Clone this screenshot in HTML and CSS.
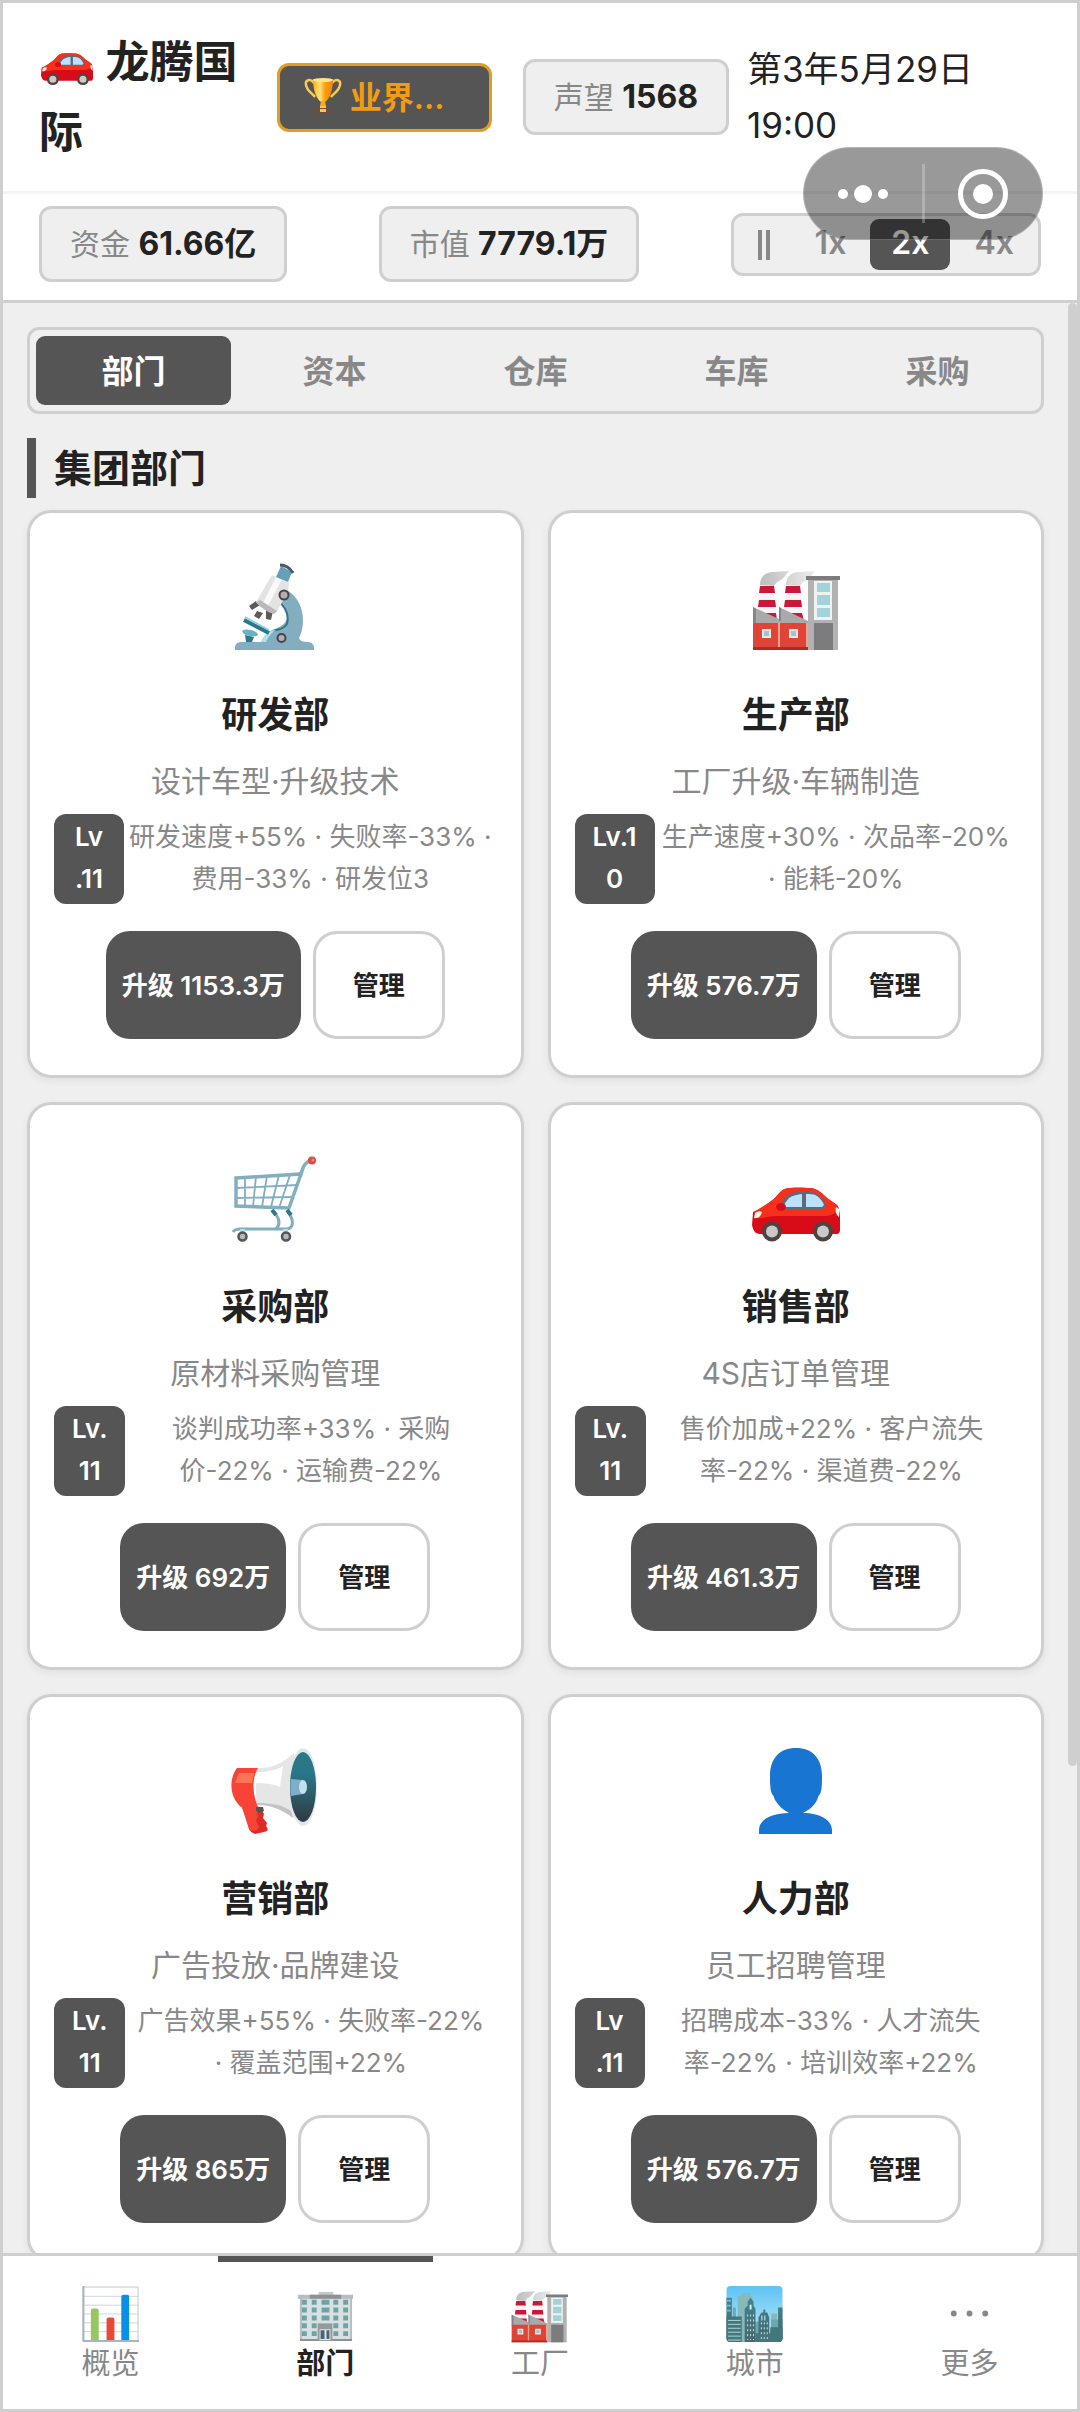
FILE: index.html
```html
<!DOCTYPE html>
<html lang="zh-CN">
<head>
    <meta charset="UTF-8">
    <meta name="viewport" content="width=device-width, initial-scale=1.0">
    <title>龙腾国际 - 部门</title>
    <link rel="stylesheet" href="styles.css">
</head>
<body>
    <!-- 图标库 -->
    <svg class="icon-defs" aria-hidden="true">
        <defs>
            <linearGradient id="sky" x1="0" y1="0" x2="0" y2="1">
                <stop offset="0" stop-color="#5fc3f3"/>
                <stop offset="0.7" stop-color="#a5e0f7"/>
            </linearGradient>
            <linearGradient id="tower" x1="0" y1="0" x2="0" y2="1">
                <stop offset="0" stop-color="#3f8492"/>
                <stop offset="1" stop-color="#4a666c"/>
            </linearGradient>
            <linearGradient id="horn" x1="0" y1="0" x2="0" y2="1">
                <stop offset="0.3" stop-color="#2a7789"/>
                <stop offset="1" stop-color="#2f3a40"/>
            </linearGradient>
            <linearGradient id="gold" x1="0" y1="0" x2="1" y2="0">
                <stop offset="0" stop-color="#ffb300"/>
                <stop offset="0.35" stop-color="#ffe082"/>
                <stop offset="0.6" stop-color="#ffa000"/>
                <stop offset="1" stop-color="#f57f17"/>
            </linearGradient>
            <linearGradient id="smoke" x1="0" y1="0" x2="1" y2="0">
                <stop offset="0" stop-color="#bdbdbd"/>
                <stop offset="1" stop-color="#ececec"/>
            </linearGradient>

            <symbol id="i-car" viewBox="0 0 88 88">
                <path fill="#d80c18" d="M1 58c0-2 3-2 5-3 7-4 12-8 17-12 5-6 8-10 15-10 8-1 17 0 21 0 7 1 12 6 16 10l10 7c2 2 3 9 3 14v11c0 2-1 4-3 4H8c-5 0-7-4-8-9z"/>
                <path fill="#f7301c" d="M2 57c8-5 15-9 21-14 5-6 8-10 15-10h21c7 1 12 6 16 10l10 7 2 5c-4 4-9 6-16 6H25c-8 0-14 3-20 2z"/>
                <path fill="#5d6a78" d="M27 54c3-8 7-14 13-16 8-2 20-2 25 1 5 3 8 8 9 12l-3 3z"/>
                <path fill="#bbe1fb" d="M31 52c3-6 6-10 10-11 3-1 6-2 9-2v13zM54 39c4 0 8 0 11 2 3 2 6 6 7 9l-2 2H54z"/>
                <ellipse cx="29" cy="52" rx="5" ry="4" fill="#d80c18"/>
                <path fill="#fff4ea" d="M3 58c3-2 6-2 7-1-1 4-4 7-8 6zM87 54l-3-2c-1 4 0 8 3 10z"/>
                <circle cx="20" cy="76.500" r="10" fill="#50433f"/>
                <circle cx="20" cy="76.500" r="6" fill="#c9c9c9"/>
                <circle cx="71" cy="76.500" r="10" fill="#50433f"/>
                <circle cx="71" cy="76.500" r="6" fill="#c9c9c9"/>
            </symbol>

            <symbol id="i-trophy" viewBox="0 0 38 38">
                <path fill="none" stroke="#f5cb53" stroke-width="2.500" d="M10 6C6 1 1 3 2 8c1 6 6 8 9 12M28 6c4-5 9-3 8 2-1 6-6 8-9 12"/>
                <path fill="url(#gold)" d="M9 2h20c0 10-3 20-8 23h-4C12 22 9 12 9 2z"/>
                <ellipse cx="19" cy="3" rx="10" ry="2" fill="#ffe58a"/>
                <path fill="#f9a825" d="M17 24h4l1 5h-6z"/>
                <path fill="#6d4c41" d="M12 31h14l3 6H9z"/>
                <path fill="#ffca28" d="M16 29h6v2h-6zM16 32h6v3h-6z"/>
            </symbol>

            <symbol id="i-microscope" viewBox="0 0 88 88">
                <path fill="#82aec0" d="M57 28c10 6 15 17 15 30 0 7-2 13-4 17 1 3 4 4 9 4 4 0 6 3 6 6v2H4v-2c0-4 3-6 6-6h20c3-6 7-11 14-13 9-3 13-8 12-16-1-5-3-9-6-11z"/>
                <path fill="none" stroke="#2f7889" stroke-width="2" d="M50 40c6 7 8 14 6 21-4 6-9 5-14 7"/>
                <path fill="#b3e1ee" d="M30 79c4-8 9-12 15-12-5 3-8 7-10 12z"/>
                <path stroke="#2f7889" stroke-width="4" d="M13 57l25 13"/>
                <path stroke="#84d0e4" stroke-width="1.500" d="M14 54l24 13"/>
                <path fill="#2f7889" d="M14 72l9 2-2 5h-6z"/>
                <ellipse cx="19" cy="70" rx="8" ry="3" fill="#68b2c3" transform="rotate(12 19 70)"/>
                <path fill="#5f5a5a" d="M25 38l4 4-8 5-3-4zM26 48l6 2-4 6-5-3zM35 47l7 1-2 9-5-1z"/>
                <path fill="#e3e3e3" d="M41 12l17 8-1 9-12 21c-8-1-15-5-20-11z"/>
                <path fill="#fafafa" d="M45 14l6 2-15 29-5-3z"/>
                <path fill="#bababa" d="M25 39l4-2 17 11-3 3c-7-2-13-6-18-12z"/>
                <path fill="#659fba" d="M50 3l11 6-4 10-12-5z"/>
                <path stroke="#4b5a61" stroke-width="3" fill="none" d="M49 2c5 0 10 3 13 8"/>
                <circle cx="53" cy="32" r="4.500" fill="#b5aeb0" stroke="#474348" stroke-width="2"/>
                <circle cx="50.500" cy="75" r="4" fill="#b5aeb0" stroke="#474348" stroke-width="2"/>
            </symbol>

            <symbol id="i-factory" viewBox="0 0 88 88">
                <path fill="url(#smoke)" d="M8 22c0-9 6-13 14-13l15-1c-3 3-5 8-10 10-3 1-3 3-5 5zM34 22c0-9 6-13 14-13l15-1c-3 3-5 8-10 10-3 1-3 3-5 5z"/>
                <path fill="#f5f3f3" d="M8 23h14l3 36H5zM34 23h14l4 36H32z"/>
                <path fill="#cb1739" d="M8 23h14l1 7H7zM7 37h16l1 7H6zM6 50h18l1 8H5zM34 23h14l1 7H33zM33 37h16l1 7H32zM32 50h18l2 8H31z"/>
                <path fill="#a9a9a9" d="M1 44l26 12V44l29 14v4H1z"/>
                <path fill="#858585" d="M1 44l3 2v14H1zM27 44l2 1v13h-2z"/>
                <path fill="#df4437" d="M1 60h55v27H1z"/>
                <path fill="#efa38e" d="M26 60h2v25h-2zM54 60h2v25h-2z"/>
                <path fill="#a92d29" d="M1 84h55v3H1z"/>
                <path fill="#e7e9e8" d="M10 66h9v9h-9zM37 66h9v9h-9z"/>
                <path fill="#9fc5cc" d="M12 68h5v5h-5zM39 68h5v5h-5z"/>
                <path fill="#b2b2b2" d="M56 16h30v71H56z"/>
                <path fill="#7c7c7e" d="M54 13h34v4H54zM62 60h19v27H62z"/>
                <path fill="#eef3f2" d="M62 18h18v39H62z"/>
                <path fill="#a2d2da" d="M65 20h13v9H65zM65 32h13v10H65zM65 45h13v9H65z"/>
            </symbol>

            <symbol id="i-cart" viewBox="0 0 88 88">
                <g fill="none" stroke="#82aec0">
                    <path stroke-width="3.500" d="M5 23l65-4-12 34-53-2z"/>
                    <path stroke-width="1.800" d="M5 33l62-3M5 43l58-1M14 22v30M25 21l-3 31M36 21l-5 31M48 20l-8 32M59 20l-11 33"/>
                    <path stroke-width="3.500" d="M69 21c3-7 3-13 11-16"/>
                    <path stroke-width="3" d="M2 77c2-3 4-3 7-3h47c7-1 7-9 1-17M43 57c6 7 6 13 2 17"/>
                </g>
                <path stroke="#2f7889" stroke-width="4" d="M41 55l4 5M56 55l4 5"/>
                <circle cx="81" cy="5.500" r="4" fill="#e34645"/>
                <circle cx="82" cy="5" r="1.500" fill="#c49a86"/>
                <path fill="#b3e1ee" d="M9 74h5v7H9zM52 74h5v7h-5z"/>
                <circle cx="11.500" cy="81.500" r="4" fill="#b4b8bb" stroke="#50555a" stroke-width="2.500"/>
                <circle cx="55" cy="81.500" r="4" fill="#b4b8bb" stroke="#50555a" stroke-width="2.500"/>
            </symbol>

            <symbol id="i-megaphone" viewBox="0 0 88 88">
                <path fill="#de2b25" d="M11 58l18 2 4 7-1 4 4 5-1 3c3 4 2 5-2 6l-9 2c-3-1-5-3-6-5z"/>
                <path fill="#f84436" d="M10 58l15 2 2 9-2 5 3 6-2 3-7 1z"/>
                <path fill="#57534f" d="M25 60h7l1 4-4 2-4-2z"/>
                <path fill="#e6e6e6" d="M25 21c16 1 27-5 38-15v65c-11-8-22-14-38-14z"/>
                <path fill="#c3c3c3" d="M26 56c14 0 26 2 34 8l2 7C50 62 40 58 26 58z"/>
                <path fill="#fff" d="M26 25c10 0 20-2 26-6l-3 21c-6-3-14-4-25-4z"/>
                <path fill="#f84436" d="M6 21h21c-6 10-6 25 0 39H10C-2 50-2 31 6 21z"/>
                <path fill="#ff7452" d="M8 26h15l-2 10H4z"/>
                <ellipse cx="72" cy="40" rx="14" ry="39" fill="#e4e6e8"/>
                <ellipse cx="72" cy="40" rx="13" ry="35" fill="url(#horn)"/>
                <path fill="#7dafc8" d="M60 32l12 1v14l-12 2c-1-6-1-12 0-17z"/>
                <ellipse cx="72" cy="40" rx="4" ry="7" fill="#c5dfe9"/>
            </symbol>

            <symbol id="i-person" viewBox="0 0 88 88">
                <path fill="#1875d2" d="M44 1c16 0 26 10 26 28 0 6 0 15-2 18-2 2-2 4-3 6-3 6-8 10-14 13 17 0 29 7 29 17v4H7v-4c0-10 12-17 30-17-6-3-10-7-14-13-1-2-1-4-3-6-2-4-2-12-2-18C18 11 28 1 44 1z"/>
            </symbol>

            <symbol id="i-chart" viewBox="0 0 58 58">
                <path fill="#fff" stroke="#bcc6d1" d="M1 1h56v55H1z"/>
                <path fill="none" stroke="#cdd5dc" d="M1 10.500h56M1 19.500h56M1 28.500h56M1 37.500h56M1 46.500h56"/>
                <path fill="none" stroke="#a9b4c2" stroke-width="2" d="M1.500 0v56H58"/>
                <path fill="#97c75f" d="M9 25q0-2 2-2h4q2 0 2 2v30H9z"/>
                <path fill="#ea4839" d="M25 34q0-2 2-2h4q2 0 2 2v21h-8z"/>
                <path fill="#0890e8" d="M40 11q0-2 2-2h4q2 0 2 2v44h-8z"/>
            </symbol>

            <symbol id="i-office" viewBox="0 0 58 58">
                <path fill="#c5c8c8" d="M22 6h15v5H22z"/>
                <path fill="#d9e0e1" d="M3 11h53v45H3z"/>
                <path fill="#b8bdbe" d="M1 9h56v4H1zM3 12h2v43H3zM54 12h2v43h-2z"/>
                <path fill="#8d9292" d="M13 9h32v4H13zM3 54h53v2H3z"/>
                <path fill="none" stroke="#70a2a5" stroke-width="5" stroke-dasharray="5 3" d="M7.500 14v38M17.500 14v38M39.500 14v38M49.500 14v38"/>
                <path fill="none" stroke="#70a2a5" stroke-width="8" stroke-dasharray="5 3" d="M29 14v22"/>
                <path fill="#969a9a" d="M21 38h15v18H21z"/>
                <path fill="#e2e6e6" d="M23 44h11v11H23z"/>
                <path fill="#4b6478" d="M24 45h4v9h-4zM30 45h3v9h-3z"/>
            </symbol>

            <symbol id="i-city" viewBox="0 0 58 58">
                <clipPath id="city-clip"><rect x="0.500" width="57" height="57" rx="4"/></clipPath>
                <g clip-path="url(#city-clip)">
                    <path fill="url(#sky)" d="M0 0h58v58H0z"/>
                    <path fill="#86b9b9" d="M12 10h4V7h9v3h2v48H12zM46 28h6v30h-6z"/>
                    <path fill="#6aa9b0" d="M7 22h3v36H7zM28 36h6v22h-6zM46 34h12v24H46z"/>
                    <path fill="url(#tower)" d="M0 12h6v46H0zM19 58V23l3-3v-4l3-4 3 4v4l2 3v35zM33 58V32l3-5h2v-3h2v3h2l2 5v26zM53 22h5v36h-5z"/>
                    <path fill="#43767d" d="M0 31h16v27H0zM30 48h28v10H30zM45 42h13v10H45z"/>
                    <path stroke="#b2d9d8" fill="none" d="M2 35h13M2 39h13M2 43h13M2 47h13M2 51h13M2 55h13"/>
                    <path stroke="#c3e7e7" stroke-dasharray="2 3" fill="none" d="M22 29v26M25 29v26M28 29v26M36 37v19M39 37v19M42 37v19M2 14v14M4 14v14"/>
                    <path fill="#d3f1f3" d="M24 19h2v5h-2zM36 30h1v5h-1zM39 30h1v5h-1z"/>
                </g>
            </symbol>

            <symbol id="i-more" viewBox="0 0 58 58">
                <g fill="#888">
                    <circle cx="13" cy="28" r="3"/>
                    <circle cx="29" cy="28" r="3"/>
                    <circle cx="45" cy="28" r="3"/>
                </g>
            </symbol>
        </defs>
    </svg>

    <div class="app">
        <header class="header">
            <div class="header-top">
                <div class="brand">
                    <h1 class="company"><svg class="company-icon"><use href="#i-car"/></svg> 龙腾国际</h1>
                    <button class="rank"><svg class="rank-icon"><use href="#i-trophy"/></svg> 业界...</button>
                    <div class="stat">声望 <b>1568</b></div>
                </div>
                <div class="date">第3年5月29日 19:00</div>
            </div>
            <div class="header-bottom">
                <div class="stat">资金 <b>61.66亿</b></div>
                <div class="stat">市值 <b>7779.1万</b></div>
                <div class="speed">
                    <button class="speed-btn" aria-label="暂停"><svg class="pause-icon" viewBox="0 0 12 30"><path fill="currentColor" d="M0 0h4v30H0zM8 0h4v30H8z"/></svg></button>
                    <button class="speed-btn">1x</button>
                    <button class="speed-btn active">2x</button>
                    <button class="speed-btn">4x</button>
                </div>
            </div>
            <div class="capsule">
                <button class="capsule-btn" aria-label="菜单">
                    <svg width="52" height="20" viewBox="0 0 52 20"><g fill="#fff"><circle cx="6" cy="10" r="5"/><circle cx="26" cy="10" r="9"/><circle cx="46" cy="10" r="5"/></g></svg>
                </button>
                <button class="capsule-btn" aria-label="关闭">
                    <svg width="50" height="50" viewBox="0 0 50 50"><circle cx="25" cy="25" r="22.500" fill="none" stroke="#fff" stroke-width="5"/><circle cx="25" cy="25" r="10" fill="#fff"/></svg>
                </button>
            </div>
        </header>

        <div class="main">
            <main class="content">
                <div class="tabs">
                    <button class="tab active">部门</button>
                    <button class="tab">资本</button>
                    <button class="tab">仓库</button>
                    <button class="tab">车库</button>
                    <button class="tab">采购</button>
                </div>

                <h2 class="section-title">集团部门</h2>

                <div class="dept-grid">
                    <div class="card">
                        <svg class="card-icon"><use href="#i-microscope"/></svg>
                        <h3>研发部</h3>
                        <p class="desc">设计车型·升级技术</p>
                        <div class="info">
                            <div class="level">Lv<br>.11</div>
                            <p class="effect">研发速度+55% · 失败率-33% ·<br>费用-33% · 研发位3</p>
                        </div>
                        <div class="actions">
                            <button class="btn primary">升级 1153.3万</button>
                            <button class="btn">管理</button>
                        </div>
                    </div>
                    <div class="card">
                        <svg class="card-icon"><use href="#i-factory"/></svg>
                        <h3>生产部</h3>
                        <p class="desc">工厂升级·车辆制造</p>
                        <div class="info">
                            <div class="level">Lv.1<br>0</div>
                            <p class="effect">生产速度+30% · 次品率-20%<br>· 能耗-20%</p>
                        </div>
                        <div class="actions">
                            <button class="btn primary">升级 576.7万</button>
                            <button class="btn">管理</button>
                        </div>
                    </div>
                    <div class="card">
                        <svg class="card-icon"><use href="#i-cart"/></svg>
                        <h3>采购部</h3>
                        <p class="desc">原材料采购管理</p>
                        <div class="info">
                            <div class="level">Lv.<br>11</div>
                            <p class="effect">谈判成功率+33% · 采购<br>价-22% · 运输费-22%</p>
                        </div>
                        <div class="actions">
                            <button class="btn primary">升级 692万</button>
                            <button class="btn">管理</button>
                        </div>
                    </div>
                    <div class="card">
                        <svg class="card-icon"><use href="#i-car"/></svg>
                        <h3>销售部</h3>
                        <p class="desc">4S店订单管理</p>
                        <div class="info">
                            <div class="level">Lv.<br>11</div>
                            <p class="effect">售价加成+22% · 客户流失<br>率-22% · 渠道费-22%</p>
                        </div>
                        <div class="actions">
                            <button class="btn primary">升级 461.3万</button>
                            <button class="btn">管理</button>
                        </div>
                    </div>
                    <div class="card">
                        <svg class="card-icon"><use href="#i-megaphone"/></svg>
                        <h3>营销部</h3>
                        <p class="desc">广告投放·品牌建设</p>
                        <div class="info">
                            <div class="level">Lv.<br>11</div>
                            <p class="effect">广告效果+55% · 失败率-22%<br>· 覆盖范围+22%</p>
                        </div>
                        <div class="actions">
                            <button class="btn primary">升级 865万</button>
                            <button class="btn">管理</button>
                        </div>
                    </div>
                    <div class="card">
                        <svg class="card-icon"><use href="#i-person"/></svg>
                        <h3>人力部</h3>
                        <p class="desc">员工招聘管理</p>
                        <div class="info">
                            <div class="level">Lv<br>.11</div>
                            <p class="effect">招聘成本-33% · 人才流失<br>率-22% · 培训效率+22%</p>
                        </div>
                        <div class="actions">
                            <button class="btn primary">升级 576.7万</button>
                            <button class="btn">管理</button>
                        </div>
                    </div>
                </div>
            </main>
            <div class="scrollbar"><div class="scrollbar-thumb"></div></div>
        </div>

        <nav class="nav">
            <button class="nav-item"><svg class="nav-icon"><use href="#i-chart"/></svg>概览</button>
            <button class="nav-item active"><svg class="nav-icon"><use href="#i-office"/></svg>部门</button>
            <button class="nav-item"><svg class="nav-icon"><use href="#i-factory"/></svg>工厂</button>
            <button class="nav-item"><svg class="nav-icon"><use href="#i-city"/></svg>城市</button>
            <button class="nav-item"><svg class="nav-icon"><use href="#i-more"/></svg>更多</button>
        </nav>
    </div>
</body>
</html>
```
FILE: styles.css
```css
* {
    box-sizing: border-box;
    margin: 0;
    padding: 0;
}
body {
    font-family: Inter, 'Noto Sans CJK SC', sans-serif;
    font-size: 30px;
    color: #222;
    background: #efefef;
}
button {
    font: inherit;
    color: inherit;
    background: none;
    border: none;
    cursor: pointer;
}
.icon-defs {
    position: absolute;
    width: 0;
    height: 0;
}
.app {
    display: flex;
    flex-direction: column;
    height: 100vh;
    border: 3px solid #cfcfcf;
}

/* 顶部 */
.header {
    position: relative;
    background: #fff;
    border-bottom: 3px solid #cfcfcf;
}
.header-top {
    display: flex;
    align-items: center;
    gap: 18px;
    padding: 24px 36px;
    border-bottom: 3px solid #f4f4f4;
}
.brand {
    display: flex;
    align-items: center;
    gap: 31px;
    flex: 1;
}
.company {
    flex: 1;
    font-size: 44px;
    font-weight: 700;
    line-height: 70px;
}
.company-icon {
    width: 52px;
    height: 52px;
    margin: 0 2px;
    vertical-align: -8px;
}
.rank {
    width: 215px;
    height: 69px;
    padding: 0 24px 4px;
    border: 3px solid #e09e27;
    border-radius: 12px;
    background: #555;
    color: #f39c12;
    font-size: 32px;
    font-weight: 600;
    text-align: left;
    white-space: nowrap;
}
.rank-icon {
    width: 38px;
    height: 38px;
    vertical-align: -6px;
}
.stat {
    padding: 12px 28px;
    border: 3px solid #cfcfcf;
    border-radius: 12px;
    background: #efefef;
    color: #888;
    line-height: 45px;
    white-space: nowrap;
}
.stat b {
    color: #222;
    font-size: 32px;
    font-weight: 700;
}
.date {
    flex: 0 0 294px;
    font-size: 35px;
    line-height: 56px;
}
.header-bottom {
    display: flex;
    align-items: center;
    justify-content: space-between;
    padding: 12px 36px 18px;
}
.speed {
    display: flex;
    gap: 3px;
    padding: 3px;
    border: 3px solid #cfcfcf;
    border-radius: 12px;
    background: #efefef;
}
.speed-btn {
    height: 51px;
    padding: 0 21px 4px;
    border-radius: 9px;
    color: #888;
    font-size: 32px;
    font-weight: 600;
}
.speed-btn.active {
    background: #555;
    color: #fff;
}
.pause-icon {
    width: 12px;
    height: 30px;
    vertical-align: middle;
}
.capsule {
    position: absolute;
    top: 144px;
    right: 34px;
    display: flex;
    width: 240px;
    height: 93px;
    border: 1px solid rgba(255, 255, 255, 0.25);
    border-radius: 47px;
    background: rgba(0, 0, 0, 0.4);
}
.capsule-btn {
    display: flex;
    flex: 1;
    align-items: center;
    justify-content: center;
}
.capsule::before {
    content: '';
    order: 1;
    width: 3px;
    margin: 16px 0;
    background: rgba(255, 255, 255, 0.25);
}
.capsule-btn:last-child {
    order: 2;
}

/* 内容区 */
.main {
    display: flex;
    flex: 1;
    min-height: 0;
}
.content {
    flex: 1;
    padding: 24px;
    overflow-y: auto;
    scrollbar-width: none;
}
.scrollbar {
    width: 9px;
}
.scrollbar-thumb {
    height: 75%;
    border-radius: 5px;
    background: #cfcfcf;
}
.tabs {
    display: flex;
    gap: 6px;
    padding: 6px;
    border: 3px solid #cfcfcf;
    border-radius: 12px;
}
.tab {
    flex: 1;
    height: 69px;
    padding-bottom: 4px;
    border-radius: 9px;
    color: #888;
    font-size: 32px;
    font-weight: 600;
}
.tab.active {
    background: #555;
    color: #fff;
}
.section-title {
    margin: 24px 0 12px;
    padding-left: 18px;
    border-left: 9px solid #555;
    font-size: 38px;
    font-weight: 700;
    line-height: 60px;
}
.dept-grid {
    display: grid;
    grid-template-columns: 1fr 1fr;
    gap: 24px;
}
.card {
    padding: 50px 24px 36px;
    border: 3px solid #cfcfcf;
    border-radius: 24px;
    background: #fff;
    box-shadow: 0 3px 9px rgba(0, 0, 0, 0.06);
    text-align: center;
}
.card-icon {
    display: block;
    width: 88px;
    height: 88px;
    margin: 0 auto 36px;
}
.card h3 {
    font-size: 36px;
    font-weight: 700;
    line-height: 56px;
}
.desc {
    margin: 14px 0 9px;
    color: #888;
    line-height: 48px;
}
.info {
    display: flex;
    align-items: center;
}
.level {
    min-width: 70px;
    padding: 2px 18px 4px;
    border-radius: 12px;
    background: #555;
    color: #fff;
    font-size: 26px;
    font-weight: 600;
    line-height: 42px;
}
.effect {
    flex: 1;
    padding-bottom: 2px;
    color: #888;
    font-size: 26px;
    line-height: 42px;
    white-space: nowrap;
}
.actions {
    display: flex;
    justify-content: center;
    gap: 12px;
    margin-top: 27px;
}
.btn {
    min-width: 132px;
    height: 108px;
    padding: 0 16px 4px;
    border: 3px solid #cfcfcf;
    border-radius: 24px;
    background: #fff;
    font-size: 26px;
    font-weight: 600;
    white-space: nowrap;
}
.btn.primary {
    border: none;
    background: #555;
    color: #fff;
}

/* 底部导航 */
.nav {
    display: flex;
    border-top: 3px solid #cfcfcf;
    background: #fff;
}
.nav-item {
    display: flex;
    flex: 1;
    flex-direction: column;
    align-items: center;
    padding: 24px 0;
    border-top: 6px solid transparent;
    color: #888;
    font-size: 29px;
    line-height: 42px;
}
.nav-item.active {
    border-top-color: #555;
    color: #222;
    font-weight: 700;
}
.nav-icon {
    width: 57px;
    height: 57px;
}
```
